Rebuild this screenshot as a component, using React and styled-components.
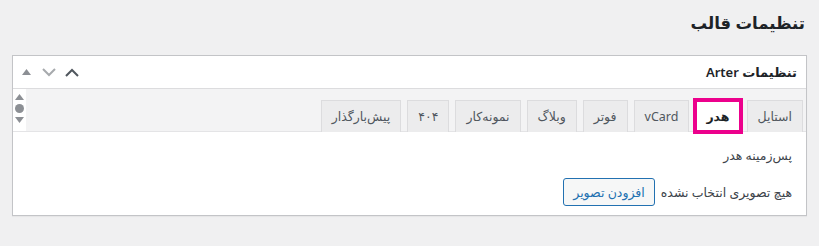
import React from 'react';
import styled, { createGlobalStyle } from 'styled-components';

const GlobalStyle = createGlobalStyle`
  body {
    margin: 0;
    background: #f0f0f1;
    font-family: 'Noto Sans', 'DejaVu Sans', sans-serif;
    direction: rtl;
  }
`;

const Page = styled.div`
  padding: 0 12px 0 12px;
  height: 246px;
  box-sizing: border-box;
`;

const Title = styled.h1`
  margin: 0;
  padding: 8px 2px 0 0;
  height: 55px;
  box-sizing: border-box;
  font-size: 16.5px;
  font-weight: 700;
  color: #1d2327;
  line-height: 30px;
`;

const Box = styled.div`
  background: #fff;
  border: 1px solid #c3c4c7;
  box-shadow: 0 1px 1px rgba(0, 0, 0, 0.04);
`;

const Header = styled.div`
  display: flex;
  align-items: center;
  justify-content: space-between;
  height: 32px;
  padding: 0 9px 0 5px;
  border-bottom: 1px solid #dcdcde;
`;

const HeaderTitle = styled.h2`
  margin: 0;
  font-size: 13px;
  font-weight: 600;
  color: #1d2327;
`;

const Handles = styled.div`
  display: flex;
  direction: ltr;
  align-items: center;
  gap: 7px;
`;

const Handle = styled.span`
  display: flex;
  align-items: center;
  justify-content: center;
  width: 16px;
  height: 16px;
  color: ${(p) => p.$color};
`;

const TabBar = styled.div`
  display: flex;
  height: 42px;
  border-bottom: 1px solid #e4e4e6;
`;

const Tabs = styled.div`
  flex: 1;
  display: flex;
  align-items: flex-end;
  gap: 6px;
  padding: 0 3px 0 0;
  background: #f3f3f4;
`;

const Tab = styled.div`
  display: flex;
  align-items: center;
  height: 31px;
  padding: 0 10px;
  margin-bottom: -1px;
  border: 1px solid #dcdcde;
  border-bottom: none;
  background: ${(p) => (p.$active ? '#fff' : '#ececed')};
  color: ${(p) => (p.$active ? '#1d2327' : '#50575e')};
  font-size: 12.5px;
  font-weight: ${(p) => (p.$active ? 700 : 400)};
  outline: ${(p) => (p.$active ? '4px solid #ec008c' : 'none')};
  outline-offset: -2px;
  position: relative;
`;

const Scroller = styled.div`
  width: 13px;
  display: flex;
  flex-direction: column;
  align-items: center;
  padding-top: 5px;
  gap: 4px;
  background: #fff;
`;

const Dot = styled.span`
  width: 9px;
  height: 9px;
  border-radius: 50%;
  background: #8c8f94;
`;

const Body = styled.div`
  padding: 14px 14px 9px;
`;

const Label = styled.div`
  font-size: 12.5px;
  color: #3c434a;
  line-height: 20px;
`;

const Row = styled.div`
  display: flex;
  align-items: center;
  gap: 6px;
  margin-top: 12px;
  font-size: 12.5px;
  color: #3c434a;
`;

const Button = styled.button`
  height: 28px;
  padding: 0 9px;
  border: 1px solid #2271b1;
  border-radius: 3px;
  background: #f6f7f7;
  color: #2271b1;
  font-family: inherit;
  font-size: 12.5px;
`;

const Triangle = ({ down }) => (
  <svg width="9" height="6" viewBox="0 0 9 6">
    <path d={down ? 'M0 0h9L4.5 6z' : 'M0 6h9L4.5 0z'} fill="#8c8f94" />
  </svg>
);

const Chevron = ({ up }) => (
  <svg width="14" height="9" viewBox="0 0 14 9">
    <path
      d={up ? 'M1 8l6-6 6 6' : 'M1 1l6 6 6-6'}
      fill="none"
      stroke="currentColor"
      strokeWidth="2"
    />
  </svg>
);

const tabs = ['استایل', 'هدر', 'vCard', 'فوتر', 'وبلاگ', 'نمونه‌کار', '۴۰۴', 'پیش‌بارگذار'];

export default function App() {
  return (
    <Page>
      <GlobalStyle />
      <Title>تنظیمات قالب</Title>
      <Box>
        <Header>
          <HeaderTitle>تنظیمات Arter</HeaderTitle>
          <Handles>
            <Handle $color="#8c8f94">
              <Triangle />
            </Handle>
            <Handle $color="#a7aaad">
              <Chevron />
            </Handle>
            <Handle $color="#50575e">
              <Chevron up />
            </Handle>
          </Handles>
        </Header>
        <TabBar>
          <Tabs>
            {tabs.map((t) => (
              <Tab key={t} $active={t === 'هدر'}>
                {t}
              </Tab>
            ))}
          </Tabs>
          <Scroller>
            <Triangle />
            <Dot />
            <Triangle down />
          </Scroller>
        </TabBar>
        <Body>
          <Label>پس‌زمینه هدر</Label>
          <Row>
            <span>هیچ تصویری انتخاب نشده</span>
            <Button>افزودن تصویر</Button>
          </Row>
        </Body>
      </Box>
    </Page>
  );
}
